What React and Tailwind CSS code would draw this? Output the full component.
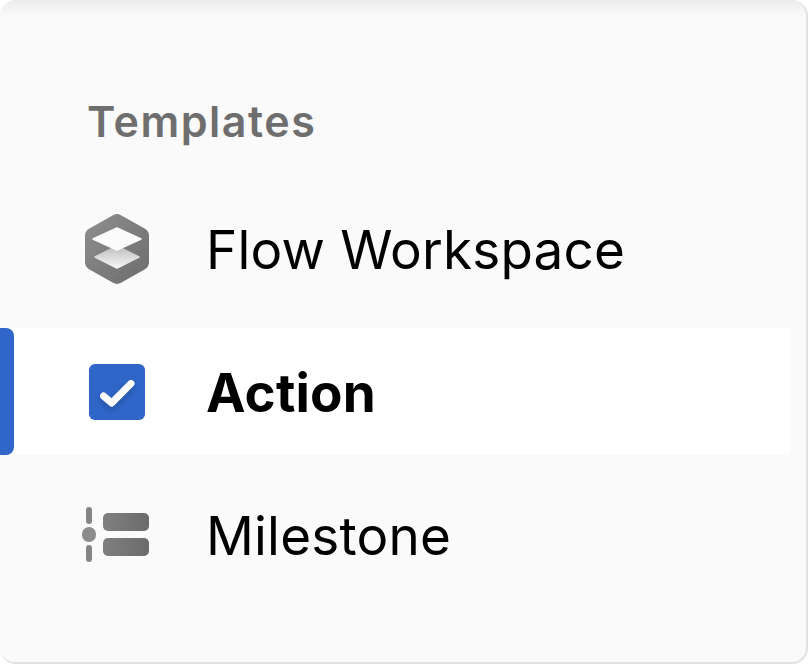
import React from "react";

const HexIcon = () => (
  <svg width="66" height="72" viewBox="0 0 66 72" fill="none">
    <defs>
      <linearGradient id="hexFill" x1="0" y1="0" x2="1" y2="1">
        <stop offset="0" stopColor="#8f8f8f" />
        <stop offset="1" stopColor="#6c6c6c" />
      </linearGradient>
      <linearGradient id="layerFill" x1="0" y1="0" x2="0" y2="1">
        <stop offset="0" stopColor="#bdbdbd" />
        <stop offset="1" stopColor="#f6f6f6" />
      </linearGradient>
    </defs>
    <path
      d="M29 2.2a8 8 0 0 1 8 0l24 13.6a8 8 0 0 1 4 7v26.4a8 8 0 0 1-4 7L37 69.8a8 8 0 0 1-8 0L5 56.2a8 8 0 0 1-4-7V22.8a8 8 0 0 1 4-7z"
      fill="url(#hexFill)"
    />
    <path d="M33 33 55 44 33 55 11 44Z" fill="url(#layerFill)" stroke="url(#layerFill)" strokeWidth="1.5" strokeLinejoin="round" />
    <path d="M33 15 57 26 33 37 9 26Z" fill="#fbfbfb" stroke="#fbfbfb" strokeWidth="1.5" strokeLinejoin="round" />
  </svg>
);

const CheckIcon = () => (
  <div className="flex h-14 w-14 items-center justify-center rounded-md bg-[#2f66c8]">
    <svg width="36" height="32" viewBox="0 0 36 32" fill="none" className="drop-shadow-[0_3px_3px_rgba(0,0,0,0.18)]">
      <path d="M4.5 20 12.7 27 32 7.5" stroke="#ffffff" strokeWidth="7" strokeLinecap="round" strokeLinejoin="round" />
    </svg>
  </div>
);

const MilestoneIcon = () => (
  <div className="-ml-[4px] flex h-14 w-[67px] items-center gap-[7px]">
    <div className="flex w-[14px] flex-col items-center gap-[3px]">
      <div className="h-[17px] w-[6px] rounded-sm bg-[#858585]" />
      <div className="h-[15px] w-[14px] rounded-full bg-[#8c8c8c]" />
      <div className="h-[17px] w-[6px] rounded-sm bg-[#858585]" />
    </div>
    <div className="flex flex-1 flex-col gap-[7px]">
      <div className="h-[18px] rounded-[5px] bg-gradient-to-r from-[#808080] to-[#6b6b6b]" />
      <div className="h-[18px] rounded-[5px] bg-gradient-to-r from-[#808080] to-[#6b6b6b]" />
    </div>
  </div>
);

const Row = ({ icon, label, active }) => (
  <div className={`flex h-[127px] items-center ${active ? "bg-white" : ""}`}>
    {active && <div className="h-full w-[14px] rounded-r-lg bg-[#2f66c8]" />}
    <div className={`flex w-[68px] justify-center ${active ? "ml-[69px]" : "ml-[83px]"}`}>{icon}</div>
    <span className={`ml-[55px] pt-[3px] text-[53px] leading-none tracking-[0.2px] text-black ${active ? "font-bold" : "font-normal"}`}>
      {label}
    </span>
  </div>
);

export default function App() {
  return (
    <div className="h-[664px] w-[808px] bg-white font-['Inter',sans-serif] antialiased">
      <div className="h-full w-full overflow-hidden rounded-[16px] border-r-2 border-b-2 border-[#e2e2e2] bg-gradient-to-b from-[#ececec] via-[#fafafa] via-[2.5%] to-[#fafafa]">
        <div className="flex h-[185px] items-start pl-[87px] pt-[99px]">
          <h2 className="text-[43px] leading-[44px] font-semibold tracking-[1.5px] text-[#6e6e6e]">Templates</h2>
        </div>
        <div className="mr-[16px] flex flex-col gap-4">
          <Row icon={<HexIcon />} label="Flow Workspace" />
          <Row icon={<CheckIcon />} label="Action" active />
          <Row icon={<MilestoneIcon />} label="Milestone" />
        </div>
      </div>
    </div>
  );
}
